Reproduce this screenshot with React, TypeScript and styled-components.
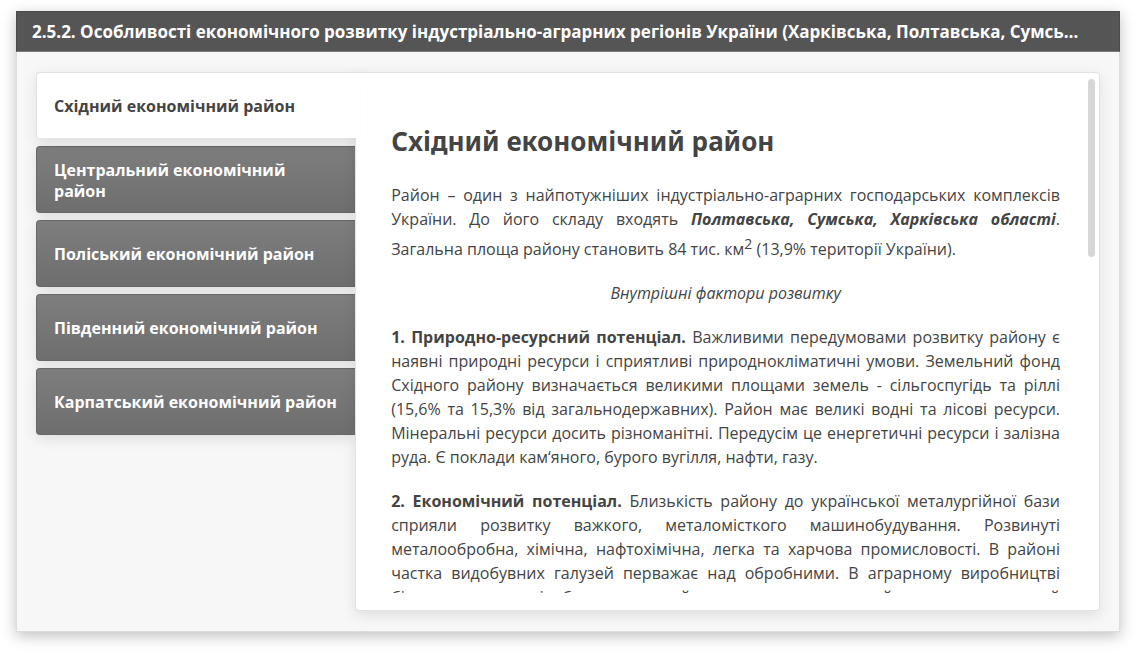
import React, { useState } from "react";
import styled, { createGlobalStyle } from "styled-components";

const GlobalStyle = createGlobalStyle`
  *, *::before, *::after { box-sizing: border-box; }
  body {
    margin: 0;
    background: #fff;
    color: #444;
    font-family: "Open Sans", "Noto Sans", sans-serif;
    font-size: 16px;
  }
`;

const Page = styled.main`
  padding: 11px 16px 21px;
`;

const Frame = styled.section`
  background: #f7f7f7;
  border: 1px solid #dcdcdc;
  border-top: 0;
  box-shadow: 0 4px 14px rgba(0, 0, 0, 0.25);
`;

const TitleBar = styled.header`
  margin: 0 -1px;
  height: 41px;
  padding: 0 32px 0 15px;
  background: #555;
  border: 1px solid #4a4a4a;
  border-bottom-color: #7c7c7c;
`;

const Title = styled.h1`
  margin: 0;
  overflow: hidden;
  color: #fff;
  font-size: 17px;
  font-weight: 700;
  line-height: 39px;
  text-overflow: ellipsis;
  white-space: nowrap;
`;

const Tabs = styled.div`
  display: grid;
  grid-template-columns: 3fr 7fr;
  padding: 20px 19px;
`;

const TabList = styled.div`
  display: flex;
  flex-direction: column;
  gap: 7px;
`;

const Tab = styled.button<{ $active: boolean }>`
  position: relative;
  z-index: ${(p) => (p.$active ? 2 : 0)};
  height: 67px;
  margin-right: ${(p) => (p.$active ? "-12px" : "0")};
  padding: 2px 16px 0 17px;
  border: 1px solid ${(p) => (p.$active ? "#e2e2e2" : "#686868")};
  border-right: 0;
  border-radius: 4px 0 0 4px;
  background: ${(p) => (p.$active ? "#fff" : "linear-gradient(#7e7e7e, #6e6e6e)")};
  box-shadow: 0 4px 14px rgba(0, 0, 0, 0.1);
  clip-path: inset(-20px 0 -20px -20px);
  color: ${(p) => (p.$active ? "#444" : "#fff")};
  font-family: inherit;
  font-size: 16px;
  font-weight: 700;
  line-height: 21px;
  text-align: left;
  cursor: pointer;

  ${(p) =>
    p.$active &&
    `
    border-bottom-color: transparent;
    background-clip: padding-box;
    clip-path: polygon(-20px -20px, 100% -20px, 100% 66px, calc(100% - 12px) 66px, calc(100% - 12px) 90px, -20px 90px);
  `}
`;

const TabLabel = styled.span`
  display: block;
  max-width: 284px;
`;

const Panel = styled.div`
  position: relative;
  z-index: 1;
  padding: 20px 39px 17px 35px;
  border: 1px solid #e2e2e2;
  border-radius: 0 4px 4px 4px;
  background: #fff;
  box-shadow: 0 4px 14px rgba(0, 0, 0, 0.1);
`;

const Scroller = styled.div`
  height: calc(100vh - 153px);
  min-height: 200px;
  overflow-y: auto;
  scrollbar-width: none;
`;

const Thumb = styled.div`
  position: absolute;
  top: 6px;
  right: 4px;
  width: 7px;
  height: 178px;
  border-radius: 4px;
  background: #d6d6d6;
`;

const Heading = styled.h2`
  margin: 28px 0 22px;
  font-family: "Noto Sans", "Open Sans", sans-serif;
  font-size: 26px;
  font-weight: 700;
  line-height: 40px;
`;

const Paragraph = styled.p<{ $center?: boolean }>`
  margin: 0 0 20px;
  line-height: 24px;
  text-align: ${(p) => (p.$center ? "center" : "justify")};
`;

const Superscript = styled.sup`
  font-size: 14px;
  line-height: 26px;
`;

const regions = [
  "Східний економічний район",
  "Центральний економічний район",
  "Поліський економічний район",
  "Південний економічний район",
  "Карпатський економічний район",
];

export default function App() {
  const [active, setActive] = useState(0);
  return (
    <Page>
      <GlobalStyle />
      <Frame>
        <TitleBar>
          <Title>
            2.5.2. Особливості економічного розвитку індустріально-аграрних регіонів України (Харківська, Полтавська, Сумська області)
          </Title>
        </TitleBar>
        <Tabs>
          <TabList role="tablist" aria-orientation="vertical">
            {regions.map((name, i) => (
              <Tab
                key={name}
                id={`tab-${i}`}
                type="button"
                role="tab"
                aria-selected={i === active}
                aria-controls="panel"
                $active={i === active}
                onClick={() => setActive(i)}
              >
                <TabLabel>{name}</TabLabel>
              </Tab>
            ))}
          </TabList>
          <Panel id="panel" role="tabpanel" aria-labelledby={`tab-${active}`}>
            <Scroller>
              <Heading>{regions[active]}</Heading>
              {active === 0 && (
                <>
                  <Paragraph>
                    Район – один з найпотужніших індустріально-аграрних господарських комплексів України. До його складу
                    входять <strong><em>Полтавська, Сумська, Харківська області</em></strong>. Загальна площа району
                    становить 84 тис. км<Superscript>2</Superscript> (13,9% території України).
                  </Paragraph>
                  <Paragraph $center><em>Внутрішні фактори розвитку</em></Paragraph>
                  <Paragraph>
                    <strong>1. Природно-ресурсний потенціал.</strong> Важливими передумовами розвитку району є наявні
                    природні ресурси і сприятливі природнокліматичні умови. Земельний фонд Східного району визначається
                    великими площами земель - сільгоспугідь та ріллі (15,6% та 15,3% від загальнодержавних). Район має
                    великі водні та лісові ресурси. Мінеральні ресурси досить різноманітні. Передусім це енергетичні
                    ресурси і залізна руда. Є поклади кам‘яного, бурого вугілля, нафти, газу.
                  </Paragraph>
                  <Paragraph>
                    <strong>2. Економічний потенціал.</strong> Близькість району до української металургійної бази
                    сприяли розвитку важкого, металомісткого машинобудування. Розвинуті металообробна, хімічна,
                    нафтохімічна, легка та харчова промисловості. В районі частка видобувних галузей перважає над
                    обробними. В аграрному виробництві більш розвинена і обсяг угодь, чий продукт склав чималий та
                    наочно вагомий сільськогосподарський потенціал.
                  </Paragraph>
                </>
              )}
            </Scroller>
            <Thumb />
          </Panel>
        </Tabs>
      </Frame>
    </Page>
  );
}
